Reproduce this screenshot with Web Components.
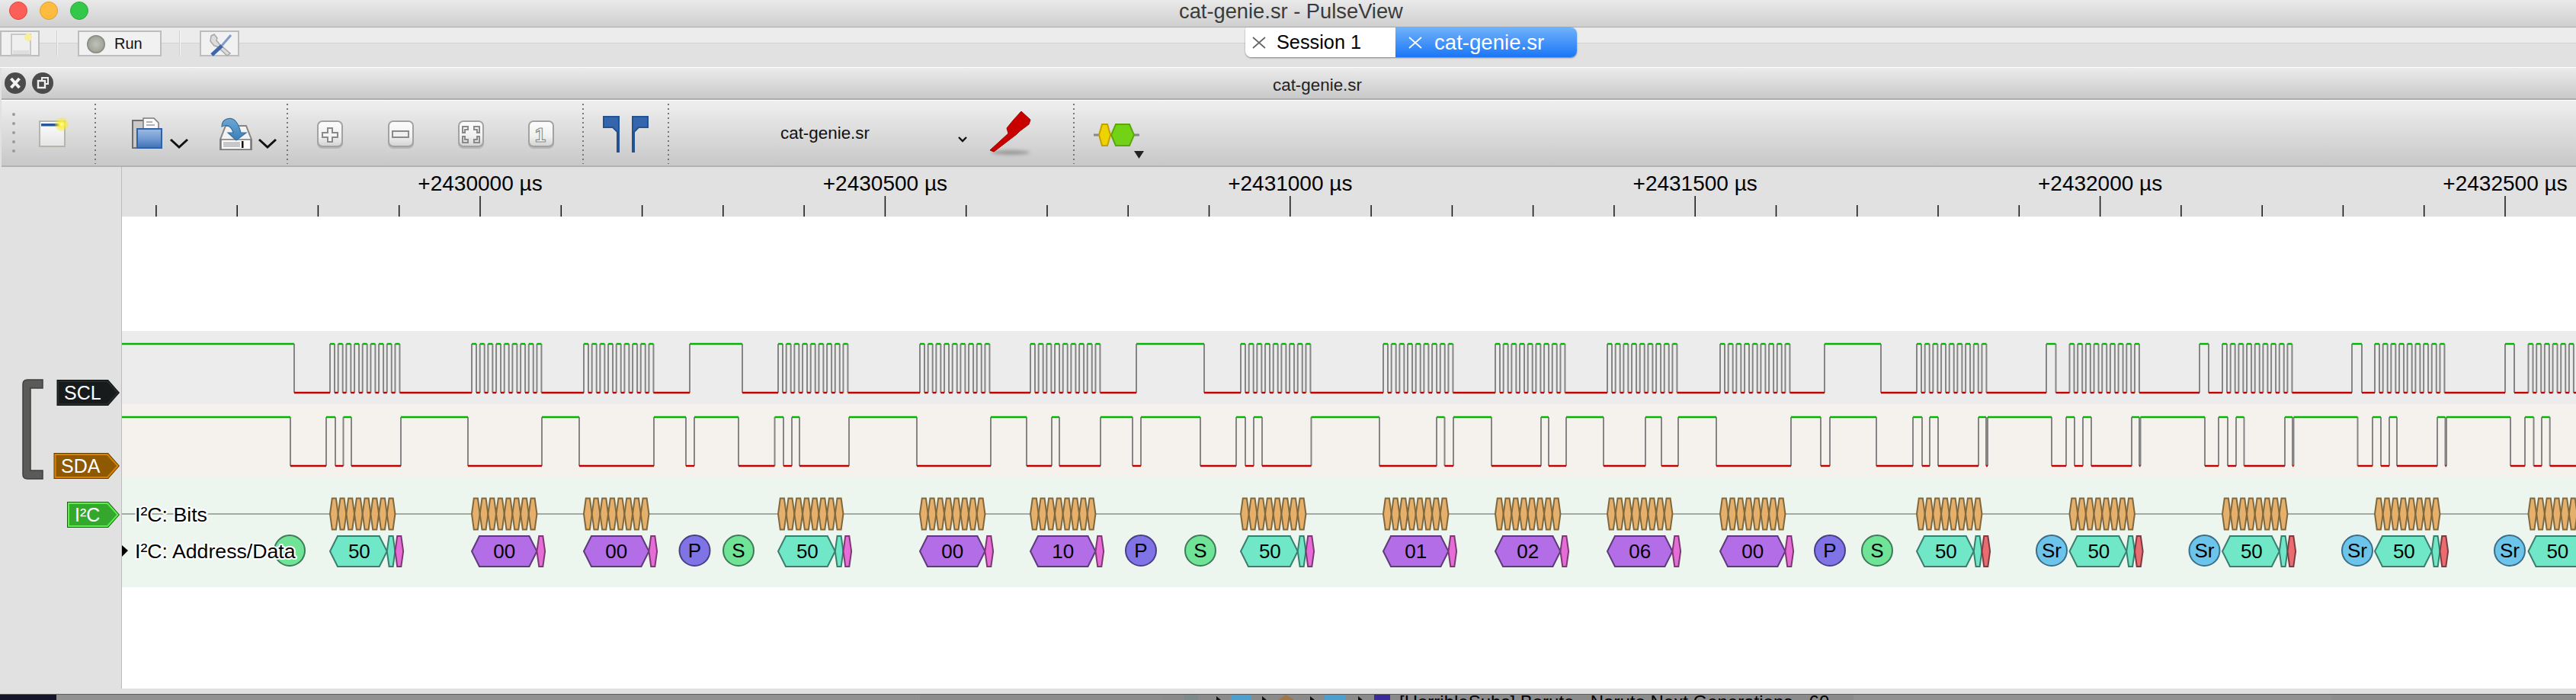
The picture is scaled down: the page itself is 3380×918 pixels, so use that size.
<!DOCTYPE html>
<html>
<head>
<meta charset="utf-8">
<title>cat-genie.sr - PulseView</title>
<style>
	html, body { margin: 0; height: 918px; overflow: hidden; background: #e1e1e1; font-family: "Liberation Sans", Arial, sans-serif; }
</style>
</head>
<body>
<pv-app>
	<mac-titlebar title-text="cat-genie.sr - PulseView"></mac-titlebar>
	<pv-session-bar>
		<pv-bar-button width="52" offset="0"><pv-icon name="newdoc"></pv-icon></pv-bar-button>
		<pv-bar-sep offset="22"></pv-bar-sep>
		<pv-bar-button width="110" offset="26"><pv-icon name="sphere"></pv-icon><span style="font-size:20px;margin-left:10px;color:#111">Run</span></pv-bar-button>
		<pv-bar-sep offset="23"></pv-bar-sep>
		<pv-bar-button width="52" offset="25"><pv-icon name="tools"></pv-icon></pv-bar-button>
		<pv-tabs offset="1320">
			<pv-tab label="Session 1"></pv-tab>
			<pv-tab label="cat-genie.sr" active></pv-tab>
		</pv-tabs>
	</pv-session-bar>
	<pv-view-header title-text="cat-genie.sr"></pv-view-header>
	<pv-toolbar>
		<pv-icon name="grip" style="margin-left:14px"></pv-icon>
		<pv-icon name="session" style="margin-left:31px"></pv-icon>
		<pv-tool-sep style="margin-left:33px"></pv-tool-sep>
		<pv-icon name="open" style="margin-left:47px"></pv-icon>
		<pv-icon name="chevron" style="margin-left:10px"></pv-icon>
		<pv-icon name="save" style="margin-left:41px"></pv-icon>
		<pv-icon name="chevron" style="margin-left:7px"></pv-icon>
		<pv-tool-sep style="margin-left:13px"></pv-tool-sep>
		<pv-icon name="zoomin" style="margin-left:37px"></pv-icon>
		<pv-icon name="zoomout" style="margin-left:57px"></pv-icon>
		<pv-icon name="zoomfit" style="margin-left:56px"></pv-icon>
		<pv-icon name="zoomone" style="margin-left:56px"></pv-icon>
		<pv-tool-sep style="margin-left:36px"></pv-tool-sep>
		<pv-icon name="cursors" style="margin-left:25px"></pv-icon>
		<pv-tool-sep style="margin-left:25px"></pv-tool-sep>
		<pv-combo label="cat-genie.sr" style="margin-left:146px"></pv-combo>
		<pv-icon name="probe" style="margin-left:28px"></pv-icon>
		<pv-tool-sep style="margin-left:53px"></pv-tool-sep>
		<pv-icon name="decoder" style="margin-left:25px"></pv-icon>
	</pv-toolbar>
	<pv-trace-view>
		<pv-trace-header slot="header"></pv-trace-header>
		<pv-ruler></pv-ruler>
		<pv-signal-row name="scl"></pv-signal-row>
		<pv-signal-row name="sda"></pv-signal-row>
		<pv-decoder-row></pv-decoder-row>
	</pv-trace-view>
	<pv-dock></pv-dock>
</pv-app>

<script>
const FONT = `"Liberation Sans", Arial, sans-serif`;

// icons are drawn in page coordinates, the viewBox cuts out their place
const zoomBase = (x, id) => `
	<defs><linearGradient id="${id}" x1="0" y1="0" x2="0" y2="1">
		<stop offset="0" stop-color="#fdfdfd"/><stop offset=".6" stop-color="#f0f0f0"/><stop offset="1" stop-color="#d2d2d2"/>
	</linearGradient></defs>
	<rect x="${x}" y="160" width="34" height="35" rx="7" fill="#888" opacity=".35"/>
	<rect x="${x + 1}" y="159" width="32" height="33" rx="6" fill="url(#${id})" stroke="#a2a29e" stroke-width="2"/>`;

const ICONS = {
	newdoc: { x: 2, y: 42, w: 48, h: 29, body: `
		<rect x="15" y="44" width="25" height="27" fill="#efefef" stroke="#c8c8c8" stroke-width="2"/>
		<rect x="17" y="65" width="21" height="5" fill="#dedede"/>
		<circle cx="37" cy="48" r="5" fill="#f6ee9a"/>` },
	sphere: { x: 112, y: 42, w: 28, h: 29, body: `
		<defs><radialGradient id="s" cx=".5" cy=".5" r=".55">
			<stop offset="0" stop-color="#bfc2b8"/><stop offset=".7" stop-color="#a4a79c"/><stop offset="1" stop-color="#6f716b"/>
		</radialGradient></defs>
		<ellipse cx="126" cy="57" rx="12" ry="12" fill="url(#s)"/>` },
	tools: { x: 264, y: 42, w: 48, h: 29, body: `
		<path d="M277 46 l4 -2 4 5 -1 3 4 5 14 12 -4 3 -13 -12 -4 -1 -5 -6 z" fill="#dcdcdc" stroke="#a8a8a8" stroke-width="1.5"/>
		<path d="M303 45 L290 60" fill="none" stroke="#7f9bcb" stroke-width="3"/>
		<path d="M291 59 L278 71" fill="none" stroke="#3f66ac" stroke-width="5"/>` },
	grip: { x: 16, y: 132, w: 4, h: 85, body: [150, 162, 174, 186, 198].map(y => `<circle cx="18" cy="${y}" r="2" fill="#9a9a9a"/>`).join("") },
	session: { x: 51, y: 132, w: 40, h: 85, body: `
		<defs>
			<linearGradient id="d" x1="0" y1="0" x2="0" y2="1"><stop offset="0" stop-color="#fdfdfd"/><stop offset="1" stop-color="#e4e4e4"/></linearGradient>
			<radialGradient id="g"><stop offset="0" stop-color="#fffde0"/><stop offset=".3" stop-color="#fff23a"/><stop offset="1" stop-color="#f2e620" stop-opacity=".15"/></radialGradient>
		</defs>
		<rect x="52" y="159" width="33" height="33" fill="url(#d)" stroke="#b5b5ae" stroke-width="2"/>
		<rect x="54" y="162" width="24" height="3.5" fill="#2a5599"/>
		<circle cx="81" cy="163" r="9.5" fill="url(#g)"/>` },
	open: { x: 172, y: 132, w: 40, h: 85, body: `
		<defs><linearGradient id="f" x1="0" y1="0" x2="0" y2="1"><stop offset="0" stop-color="#9dbbe2"/><stop offset=".55" stop-color="#6e98d0"/><stop offset="1" stop-color="#3f72b8"/></linearGradient></defs>
		<rect x="173" y="158" width="22" height="36" fill="#c9c9c9" stroke="#6e6e6e" stroke-width="2"/>
		<path d="M187 155 H201 L207 161 V172 H187 Z" fill="#fafafa" stroke="#7b7b7b" stroke-width="1.5"/>
		<path d="M191 160 h8 M191 164 h11" stroke="#9a9a9a" stroke-width="1.5"/>
		<rect x="179" y="169" width="32" height="25" fill="url(#f)" stroke="#2f62a8" stroke-width="2"/>` },
	save: { x: 287, y: 132, w: 44, h: 85, body: `
		<defs><linearGradient id="a" x1="0" y1="0" x2="0" y2="1"><stop offset="0" stop-color="#6ba7d6"/><stop offset="1" stop-color="#3a7fb8"/></linearGradient></defs>
		<path d="M295 165 H322 L329 183 V196 H288 V183 Z" fill="#f3f3f3" stroke="#858585" stroke-width="2"/>
		<rect x="289" y="183" width="39" height="13" fill="#fbfbfb" stroke="#777" stroke-width="1.5"/>
		<rect x="292" y="186" width="22" height="7" fill="#c8c8c8"/>
		<rect x="316" y="185" width="2.5" height="9" fill="#111"/>
		<path d="M290 166 C290 155 303 152 309 160 C313 165 314 170 315 174 L322 174 L309 184 L298 174 L305 174 C303 167 298 162 290 166 Z" fill="url(#a)" stroke="#3a6f9f" stroke-width="1.2"/>` },
	chevron: { x: 222, y: 132, w: 24, h: 85, body: `<path d="M223 183 L234 193 L245 183" fill="none" stroke="#111" stroke-width="3"/>` },
	zoomin: { x: 414, y: 132, w: 36, h: 85, body: zoomBase(415, "z") + `
		<path d="M429 168 h6 v6 h7 v6 h-7 v6 h-6 v-6 h-7 v-6 h7 z" fill="#f4f4f4" stroke="#8a8a8a" stroke-width="2"/>` },
	zoomout: { x: 507, y: 132, w: 36, h: 85, body: zoomBase(508, "z") + `
		<rect x="514" y="172" width="21" height="8" fill="#f0f0f0" stroke="#8a8a8a" stroke-width="2"/>` },
	zoomfit: { x: 599, y: 132, w: 36, h: 85, body: zoomBase(600, "z") + `
		<g fill="none" stroke="#8a8a8a" stroke-width="2">
			<path d="M613 170 v-4 h-7 v8 h3 v-4 z M621 170 v-4 h7 v8 h-3 v-4 z M613 183 v4 h-7 v-8 h3 v4 z M621 183 v4 h7 v-8 h-3 v4 z"/>
		</g>` },
	zoomone: { x: 691, y: 132, w: 36, h: 85, body: zoomBase(692, "z") + `
		<text x="708" y="186" text-anchor="middle" font-family='${FONT}' font-weight="700" font-size="26" fill="#f8f8f8" stroke="#8a8a8a" stroke-width="1.1">1</text>` },
	cursors: { x: 790, y: 132, w: 60, h: 85, body: `
		<path d="M791 153 H811 V199 H809 V173 L803 167 H791 Z" fill="#3565ad" stroke="#24518f" stroke-width="2"/>
		<path d="M849 153 H829 V199 H831 V173 L837 167 H849 Z" fill="#3565ad" stroke="#24518f" stroke-width="2"/>` },
	combochev: { x: 1256, y: 132, w: 12, h: 85, body: `<path d="M1257 180 L1262 185 L1267 180" fill="none" stroke="#111" stroke-width="2.4"/>` },
	probe: { x: 1296, y: 132, w: 58, h: 85, body: `
		<defs><filter id="b" x="-20%" y="-100%" width="140%" height="300%"><feGaussianBlur stdDeviation="2"/></filter></defs>
		<ellipse cx="1325" cy="200" rx="25" ry="3" fill="#9a9a9a" filter="url(#b)"/>
		<path d="M1339 146 L1351 157 L1349 163 L1337 172 L1333 176 L1303 199 L1298 197 L1322 175 L1320 168 L1329 157 Z" fill="#c90000" stroke="#a40000" stroke-width="1"/>` },
	decoder: { x: 1434, y: 132, w: 68, h: 85, body: `
		<path d="M1434 177 H1494" stroke="#888" stroke-width="3"/>
		<path d="M1445 163 H1452 L1456 177 L1452 191 H1445 L1441 177 Z" fill="#edd400" stroke="#c4a000" stroke-width="2"/>
		<path d="M1463 163 H1481 L1487 177 L1481 191 H1463 L1457 177 Z" fill="#73d216" stroke="#5aa80e" stroke-width="2"/>
		<path d="M1487 198 H1500 L1493.5 208 Z" fill="#222"/>` }
};

class PvApp extends HTMLElement {
	connectedCallback() {
		this.attachShadow({ mode: "open" }).innerHTML = `
			<style>
				:host { display: flex; flex-direction: column; width: 3380px; height: 918px; overflow: hidden; font-family: ${FONT}; }
			</style>
			<slot></slot>`;
	}
}

class MacTitlebar extends HTMLElement {
	connectedCallback() {
		this.attachShadow({ mode: "open" }).innerHTML = `
			<style>
				:host { display: flex; align-items: flex-start; height: 35px; flex: none; border-bottom: 1px solid #a8a8a8;
					background: linear-gradient(#e9e9e9, #cfcfcf); font-family: ${FONT}; }
				.light { width: 24px; height: 24px; border-radius: 50%; margin-top: 2px; box-sizing: border-box; }
				.r { margin-left: 12px; background: #fc5f57; border: 1px solid #e2463f; }
				.y { margin-left: 16px; background: #fdbc40; border: 1px solid #e1a029; }
				.g { margin-left: 16px; background: #34c84a; border: 1px solid #2aac3a; }
				span { margin-left: 1431px; font-size: 27.3px; line-height: 30px; color: #3b3b3b; white-space: nowrap; }
			</style>
			<div class="light r"></div><div class="light y"></div><div class="light g"></div>
			<span>${this.getAttribute("title-text")}</span>`;
	}
}

class PvSessionBar extends HTMLElement {
	connectedCallback() {
		this.attachShadow({ mode: "open" }).innerHTML = `
			<style>
				:host { display: flex; align-items: flex-start; height: 52px; flex: none; border-bottom: 1px solid #fff;
					background: linear-gradient(#ececec 0 20px, #d2d2d2 20px 21px, #e1e1e1 21px); }
			</style>
			<slot></slot>`;
	}
}

class PvBarButton extends HTMLElement {
	connectedCallback() {
		const run = this.getAttribute("width") == "110";
		this.attachShadow({ mode: "open" }).innerHTML = `
			<style>
				:host { display: flex; align-items: center; box-sizing: border-box; height: 34px; margin-top: 4px;
					width: ${this.getAttribute("width")}px; margin-left: ${this.getAttribute("offset")}px; padding-left: ${run ? 8 : 0}px;
					border: 2px solid #bdbdbd; background: #f1f1f1; font-family: ${FONT}; }
			</style>
			<slot></slot>`;
	}
}

class PvBarSep extends HTMLElement {
	connectedCallback() {
		this.attachShadow({ mode: "open" }).innerHTML = `
			<style>
				:host { display: block; width: 2px; height: 33px; margin-top: 4px; margin-left: ${this.getAttribute("offset")}px;
					background: linear-gradient(90deg, #cfcfcf 50%, #f6f6f6 50%); }
			</style>`;
	}
}

class PvTabs extends HTMLElement {
	connectedCallback() {
		this.attachShadow({ mode: "open" }).innerHTML = `
			<style>
				:host { display: flex; height: 39px; margin-left: ${this.getAttribute("offset")}px; border-radius: 3px 8px 8px 8px;
					box-shadow: 0 1px 2px rgba(0,0,0,.45); overflow: hidden; }
			</style>
			<slot></slot>`;
	}
}

class PvTab extends HTMLElement {
	connectedCallback() {
		const active = this.hasAttribute("active");
		this.attachShadow({ mode: "open" }).innerHTML = `
			<style>
				:host { display: flex; align-items: center; box-sizing: border-box; height: 39px; font-family: ${FONT}; white-space: nowrap;
					width: ${active ? 238 : 197}px; padding-left: ${active ? 17 : 9}px;
					background: ${active ? "linear-gradient(#70b2fb, #1a76f7)" : "#fff"}; color: ${active ? "#fff" : "#000"}; }
				svg { flex: none; display: block; }
				span { margin-left: ${active ? 16 : 14}px; font-size: ${active ? 27.6 : 25.3}px; line-height: 39px; }
			</style>
			<svg width="18" height="16" viewBox="0 0 18 16"><path d="M1 1 L17 15 M17 1 L1 15" fill="none" stroke="${active ? "#fff" : "#666"}" stroke-width="1.7"/></svg>
			<span>${this.getAttribute("label")}</span>`;
	}
}

class PvViewHeader extends HTMLElement {
	connectedCallback() {
		this.attachShadow({ mode: "open" }).innerHTML = `
			<style>
				:host { display: flex; align-items: center; height: 40px; flex: none; margin-left: 2px; border-bottom: 2px solid #ababab;
					box-shadow: 0 1px 0 #fff; margin-bottom: 1px; background: linear-gradient(#ebebeb, #c9c9c9); font-family: ${FONT}; }
				svg { display: block; flex: none; margin-left: 4px; }
				span { margin-left: 1594px; width: 117px; font-size: 22.4px; padding-top: 5px; white-space: nowrap; color: #222; }
			</style>
			<svg width="70" height="30" viewBox="6 93 70 30">
				<circle cx="20" cy="108" r="14" fill="#4b4b4b"/>
				<path d="M14.5 102 L25.5 114 M25.5 102 L14.5 114" stroke="#f4f4f4" stroke-width="4"/>
				<circle cx="56" cy="108" r="14" fill="#4b4b4b"/>
				<rect x="55" y="101" width="8" height="8" fill="none" stroke="#f0f0f0" stroke-width="2"/>
				<rect x="50" y="105" width="9" height="9" fill="#4b4b4b" stroke="#f0f0f0" stroke-width="2.4"/>
			</svg>
			<span>${this.getAttribute("title-text")}</span>`;
	}
}

class PvToolbar extends HTMLElement {
	connectedCallback() {
		this.attachShadow({ mode: "open" }).innerHTML = `
			<style>
				:host { display: flex; align-items: stretch; height: 85px; flex: none; margin-left: 2px; border-bottom: 2px solid #b2b2b2;
					background: linear-gradient(#efefef, #c8c8c8); }
			</style>
			<slot></slot>`;
	}
}

class PvToolSep extends HTMLElement {
	connectedCallback() {
		this.attachShadow({ mode: "open" }).innerHTML = `
			<style>
				:host { display: block; width: 2px; margin-top: 4px; margin-bottom: 2px; flex: none;
					background: repeating-linear-gradient(#777 0 2px, transparent 2px 6px); }
			</style>`;
	}
}

class PvCombo extends HTMLElement {
	connectedCallback() {
		this.attachShadow({ mode: "open" }).innerHTML = `
			<style>
				:host { display: flex; align-items: center; flex: none; font-family: ${FONT}; color: #111; }
				span { width: 117px; font-size: 22.4px; white-space: nowrap; padding-top: 1px; }
				pv-icon { margin-left: 116px; }
			</style>
			<span>${this.getAttribute("label")}</span>
			<pv-icon name="combochev"></pv-icon>`;
	}
}

class PvIcon extends HTMLElement {
	connectedCallback() {
		const ic = ICONS[this.getAttribute("name")];
		this.attachShadow({ mode: "open" }).innerHTML = `
			<style>
				:host { display: block; flex: none; width: ${ic.w}px; height: ${ic.h}px; }
				svg { display: block; overflow: visible; }
			</style>
			<svg width="${ic.w}" height="${ic.h}" viewBox="${ic.x} ${ic.y} ${ic.w} ${ic.h}">${ic.body}</svg>`;
	}
}

class PvTraceView extends HTMLElement {
	connectedCallback() {
		this.attachShadow({ mode: "open" }).innerHTML = `
			<style>
				:host { display: grid; grid-template-columns: 160px 1fr; flex: 1; min-height: 0; background: #fff; }
				.rows { display: flex; flex-direction: column; min-width: 0; }
			</style>
			<slot name="header"></slot>
			<div class="rows"><slot></slot></div>`;
	}
}

// left column: the signal tags and the group bracket
class PvTraceHeader extends HTMLElement {
	connectedCallback() {
		const tag = (x1, y1, y2, fill, outer, inner, text, tx) => {
			const m = (y1 + y2) / 2, p = 142;
			return `<path d="M${x1} ${y1} H${p} L157 ${m} L${p} ${y2} H${x1} Z" fill="${outer}"/>
				<path d="M${x1 + 2} ${y1 + 2} H${p - 1} L154.5 ${m} L${p - 1} ${y2 - 2} H${x1 + 2} Z" fill="${fill}" stroke="${inner}" stroke-width="2"/>
				<text x="${tx}" y="${m + 9}" fill="#fff" font-size="25" font-family='${FONT}'>${text}</text>`;
		};
		this.attachShadow({ mode: "open" }).innerHTML = `
			<style>
				:host { display: block; background: #e1e1e1; border-right: 1px solid #bcbcbc; box-sizing: border-box; }
				svg { display: block; }
			</style>
			<svg width="159" height="684" viewBox="0 219 159 684">
				<path d="M56 498 H36 Q30 498 30 504 V622 Q30 628 36 628 H56 V617 H40 V509 H56 Z" fill="#5a5a58" stroke="#3f3f3f" stroke-width="1.5"/>
				${tag(74.5, 498, 532, "#171b1b", "#0d0f0f", "#262b2b", "SCL", 84)}
				${tag(70.5, 594, 628, "#8f5902", "#5c3a05", "#d98300", "SDA", 80)}
				${tag(88, 658, 692, "#33a82c", "#1c5c14", "#5cf04c", "I²C", 98)}
			</svg>`;
	}
}

class PvRuler extends HTMLElement {
	connectedCallback() {
		let ticks = "", labels = "";
		const major = 630, step = 106.28;
		for (let i = -4; i < 26; i++) {
			const x = major + i * step;
			const isMajor = i % 5 == 0;
			ticks += `<path d="M${x.toFixed(1)} ${isMajor ? 38 : 50} V65"/>`;
			if (isMajor) labels += `<text x="${x.toFixed(1)}" y="31">+${2430000 + i * 100} µs</text>`;
		}
		this.attachShadow({ mode: "open" }).innerHTML = `
			<style>
				:host { display: block; height: 65px; flex: none; margin-bottom: 150px; background: #e1e1e1; }
				svg { display: block; }
				path { stroke: #111; stroke-width: 1.5; }
				text { font: 28px ${FONT}; fill: #000; text-anchor: middle; }
			</style>
			<svg width="3220" height="65" viewBox="160 0 3220 65">${ticks}${labels}</svg>`;
	}
}

// burst = 9 clock pulses, pulse = one lone clock pulse (stop and repeated start)
const BURSTS = [433, 619, 766, 1021, 1207, 1352, 1628, 1815, 1962, 2109, 2257, 2515, 2715.5, 2916, 3116, 3317.5];
const PULSES = [[905, 974], [1491, 1580], [2394, 2468], [2685, 2697.5], [2886, 2898], [3086, 3099], [3287, 3299]];
const BIT = 10.68;

function sclEdges() {
	const pairs = [...PULSES];
	BURSTS.forEach(b => {
		for (let i = 0; i < 9; i++) pairs.push([b + i * BIT, b + i * BIT + 6]);
	});
	pairs.sort((a, b) => a[0] - b[0]);
	return [386, ...pairs.flat()];
}

const SDA_EDGES = [381, 428, 440, 450.5, 461, 526, 614, 711, 760, 858, 900, 911, 969, 1016.5, 1028, 1039, 1049, 1114, 1203, 1300,
	1347, 1380, 1390, 1444, 1486, 1497, 1575, 1622, 1634, 1645, 1656, 1720.5, 1810, 1885, 1895.5, 1907, 1957, 2022, 2032, 2055,
	2104, 2159, 2180, 2202, 2252, 2350, 2389, 2401, 2462, 2510, 2522, 2532, 2543, 2596, 2606, 2608, 2692, 2711, 2722, 2733,
	2744, 2797, 2807, 2808.5, 2893, 2911, 2923, 2934, 2944.5, 2998, 3008, 3009.5, 3093.5, 3113, 3124, 3135, 3145, 3198, 3208.5,
	3210, 3294, 3313, 3324.5, 3335, 3345.7];

class PvSignalRow extends HTMLElement {
	connectedCallback() {
		const scl = this.getAttribute("name") == "scl";
		const edges = scl ? sclEdges() : SDA_EDGES;
		const hi = 17, lo = 81;
		let verts = "", horiz = "", x = 160, high = true;
		for (const e of [...edges, 3400]) {
			horiz += `<path d="M${x} ${high ? hi : lo} H${e}" stroke="${high ? "#00b800" : "#c40000"}" stroke-width="2.4"/>`;
			if (e < 3400) verts += `<path d="M${e} ${hi} V${lo}" stroke="#858585" stroke-width="2"/>`;
			x = e;
			high = !high;
		}
		this.attachShadow({ mode: "open" }).innerHTML = `
			<style>
				:host { display: block; height: 96px; flex: none; background: ${scl ? "#ececec" : "#f5f1ec"}; }
				svg { display: block; }
				path { fill: none; }
			</style>
			<svg width="3220" height="96" viewBox="160 0 3220 96">${verts}${horiz}</svg>`;
	}
}

const COLORS = {
	bit: ["#e5b06c", "#80683c"],
	addr: ["#70e8c8", "#3b7d6f"],
	data: ["#b36de6", "#5d3a7a"],
	ack: ["#e66dd8", "#7c3a74"],
	nak: ["#e86c70", "#7e3a40"],
	start: ["#6fe396", "#3c7a58"],
	stop: ["#7f73e6", "#463f88"],
	sr: ["#6cc4ea", "#3a6e88"]
};

const ROW_DATA = [
	["50", "ack"], ["00"], ["00"], ["50", "ack"], ["00"], ["10"], ["50", "ack"], ["01"], ["02"], ["06"], ["00"],
	["50", "nak"], ["50", "nak"], ["50", "nak"], ["50", "nak"], ["50", "nak"]
];
const EVENTS = [[380, "S", "start"], [911.5, "P", "stop"], [969, "S", "start"], [1497, "P", "stop"], [1575, "S", "start"],
	[2401, "P", "stop"], [2463, "S", "start"], [2692, "Sr", "sr"], [2892.5, "Sr", "sr"], [3093, "Sr", "sr"], [3293, "Sr", "sr"]];

function hex(x, w, cy, h, slope, [fill, line]) {
	const x2 = x + w, t = cy - h, b = cy + h;
	return `<path d="M${x} ${cy} L${x + slope} ${t} H${x2 - slope} L${x2} ${cy} L${x2 - slope} ${b} H${x + slope} Z" fill="${fill}" stroke="${line}"/>`;
}

class PvDecoderRow extends HTMLElement {
	connectedCallback() {
		const y1 = 48, y2 = 97;
		let s = `<path d="M160 ${y1} H3380" stroke="#a3aca3"/>`;
		BURSTS.forEach((b, i) => {
			for (let k = 0; k < 8; k++) s += hex(b + k * BIT, BIT, y1, 20.5, 2.8, COLORS.bit);
			const [txt, tail] = ROW_DATA[i];
			if (tail) {
				const w = 7 * BIT;
				s += hex(b, w, y2, 20, 10, COLORS.addr) + `<text x="${b + w / 2 + 1}" y="${y2 + 9}">${txt}</text>`;
				s += hex(b + w, BIT, y2, 20, 2.8, COLORS.addr) + hex(b + w + BIT, BIT, y2, 20, 2.8, COLORS[tail]);
			} else {
				const w = 8 * BIT;
				s += hex(b, w, y2, 20, 10, COLORS.data) + `<text x="${b + w / 2}" y="${y2 + 9}">${txt}</text>`;
				s += hex(b + w, BIT, y2, 20, 2.8, COLORS.ack);
			}
		});
		EVENTS.forEach(([x, txt, kind]) => {
			const [fill, line] = COLORS[kind];
			const label = x == 380 ? "" : `<text x="${x}" y="${y2 + 8}">${txt}</text>`;
			s += `<ellipse cx="${x}" cy="${y2 - 1}" rx="20" ry="20" fill="${fill}" stroke="${line}"/>${label}`;
		});
		s += `<text class="lbl" x="177" y="${y1 + 10}">I²C: Bits</text><text class="lbl" x="177" y="${y2 + 9}">I²C: Address/Data</text>`;
		s += `<path d="M160 ${y2 - 8} L168 ${y2 - 1} L160 ${y2 + 7} Z" fill="#000" stroke="none"/>`;
		this.attachShadow({ mode: "open" }).innerHTML = `
			<style>
				:host { display: block; height: 144px; flex: none; background: #edf6ee; }
				svg { display: block; }
				path, ellipse { stroke-width: 2; }
				text { font: 26px ${FONT}; fill: #000; text-anchor: middle; }
				text.lbl { text-anchor: start; font-size: 26.7px; paint-order: stroke; stroke: #fff; stroke-width: 4px; stroke-linejoin: round; }
			</style>
			<svg width="3220" height="144" viewBox="160 0 3220 144">${s}</svg>`;
	}
}

class PvDock extends HTMLElement {
	connectedCallback() {
		const tri = x => `<path d="M${x} 3 l6 5 h-6 z" fill="#111"/>`;
		this.attachShadow({ mode: "open" }).innerHTML = `
			<style>
				:host { display: block; flex: none; font-family: ${FONT}; }
				.status { height: 7px; background: #e0e0e0; }
				.dock { display: flex; height: 8px; overflow: hidden; }
				.dock > div { flex: none; height: 8px; box-shadow: inset 0 1px 0 #5e5e5e; }
				svg { display: block; flex: none; }
				.files { display: flex; width: 906px; background: #8a8a8a; }
				span { margin-left: 12px; font-size: 24px; line-height: 22px; color: #000; white-space: nowrap; }
			</style>
			<div class="status"></div>
			<div class="dock">
				<div style="width:74px;background:#15152b"></div>
				<div style="width:1133px;background:#919191"></div>
				<div style="width:319px;background:#8c8c8c"></div>
				<div class="files">
					<svg width="270" height="8" viewBox="0 0 270 8" style="margin-left:28px">
						<rect x="0" y="1" width="18" height="7" fill="#7d8a8a"/>${tri(42)}
						<rect x="61" y="1" width="26" height="7" fill="#4ca0d0"/>${tri(102)}
						<path d="M123 8 L133 1 L144 8 Z" fill="#a07848"/>${tri(165)}
						<rect x="183" y="1" width="29" height="7" fill="#4ca0d0"/>${tri(228)}
						<rect x="249" y="1" width="21" height="7" fill="#3a2a9c"/>
					</svg>
					<span>[HorribleSubs] Boruto - Naruto Next Generations - 60</span>
				</div>
				<div style="width:627px;background:#919191"></div>
				<div style="width:321px;background:#8d8d8d"></div>
			</div>`;
	}
}

customElements.define("pv-app", PvApp);
customElements.define("mac-titlebar", MacTitlebar);
customElements.define("pv-session-bar", PvSessionBar);
customElements.define("pv-bar-button", PvBarButton);
customElements.define("pv-bar-sep", PvBarSep);
customElements.define("pv-tabs", PvTabs);
customElements.define("pv-tab", PvTab);
customElements.define("pv-view-header", PvViewHeader);
customElements.define("pv-toolbar", PvToolbar);
customElements.define("pv-tool-sep", PvToolSep);
customElements.define("pv-combo", PvCombo);
customElements.define("pv-icon", PvIcon);
customElements.define("pv-trace-view", PvTraceView);
customElements.define("pv-trace-header", PvTraceHeader);
customElements.define("pv-ruler", PvRuler);
customElements.define("pv-signal-row", PvSignalRow);
customElements.define("pv-decoder-row", PvDecoderRow);
customElements.define("pv-dock", PvDock);
</script>
</body>
</html>
